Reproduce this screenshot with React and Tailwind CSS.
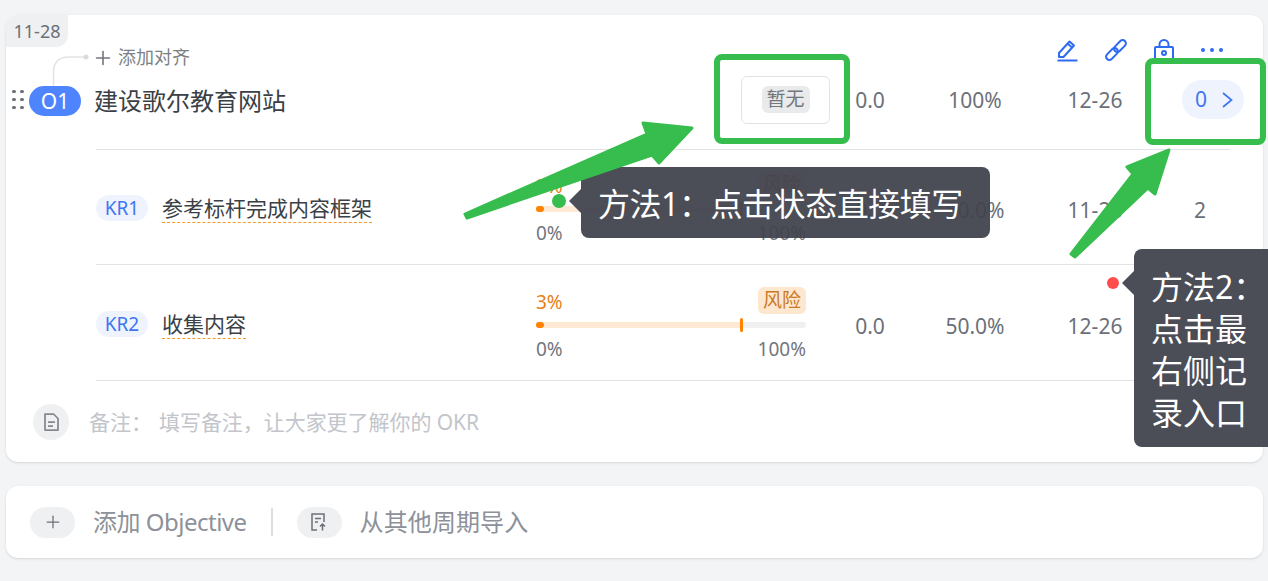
import { Plus } from 'lucide-react';

const sans = "font-['Noto_Sans','Noto_Sans_CJK_SC',sans-serif]";

function ProgressCell({ fill }) {
  return (
    <div className="w-[270px] mb-[4px] flex flex-col">
      <div className="flex items-center justify-between h-[27px]">
        <span className="pt-[4px] text-[19px] text-[#e87f13]">3%</span>
        <span className="h-[27px] w-[48px] rounded-md bg-[#fde7cf] text-[19px] leading-[27px] text-center text-[#c97a26]">风险</span>
      </div>
      <div className="relative mt-2 h-[6px] rounded-full bg-[#f0f0f0]">
        <div className={`h-full rounded-l-full bg-[#fde9d4] ${fill}`} />
        <div className="absolute left-0 top-0 h-full w-[8px] rounded-full bg-[#ff8200]" />
        <div className="absolute left-[204px] top-[-4px] h-[14px] w-[3px] rounded-sm bg-[#ff8200]" />
      </div>
      <div className="mt-[9px] flex justify-between text-[19px] leading-[24px] text-[#73767c]">
        <span>0%</span>
        <span>100%</span>
      </div>
    </div>
  );
}

function Stats({ score, percent, date, children }) {
  return (
    <div className="ml-[4px] flex items-center text-[21px] text-[#6b7078] text-center">
      <span className="w-[120px] pt-[2px]">{score}</span>
      <span className="w-[90px] pt-[2px]">{percent}</span>
      <span className="w-[150px] pt-[2px]">{date}</span>
      <div className="w-[60px] flex justify-center">{children}</div>
    </div>
  );
}

function KrRow({ name, label, percent, date, count, height }) {
  return (
    <div className={`ml-[90px] w-[1134px] pt-[6px] flex items-center border-b border-[#e2e3e5] ${height}`}>
      <div className="w-[440px] mb-[2px] flex items-center">
        <span className="mb-[2px] h-[26px] w-[52px] rounded-full bg-[#eef3fe] text-center text-[19px] leading-[26px] text-[#3f76f0]">{label}</span>
        <span className="ml-[14px] text-[21px] leading-[27px] text-[#3b3f46] border-b border-dashed border-[#f59a23]">{name}</span>
      </div>
      <ProgressCell fill="w-[204px]" />
      <Stats score="0.0" percent={percent} date={date}>
        <span className="pt-[2px]">{count}</span>
      </Stats>
    </div>
  );
}

function Callout({ className, arrow, children }) {
  return (
    <div className={`absolute rounded-lg bg-[#41434e]/95 text-white text-[32px] ${className}`}>
      <span className={`absolute h-0 w-0 border-y-[12px] border-r-[12px] border-y-transparent border-r-[#41434e]/95 ${arrow}`} />
      {children}
    </div>
  );
}

export default function App() {
  return (
    <div className={`relative h-[581px] w-[1268px] overflow-hidden bg-[#f3f4f6] pt-[15px] pl-[6px] ${sans}`}>
      <div className="relative h-[447px] w-[1257px] rounded-xl bg-white shadow-sm">
        <div className="absolute left-0 top-0 h-[32px] w-[62px] rounded-tl-xl rounded-br-xl bg-[#eff0f2] text-center text-[18px] leading-[32px] text-[#6b7078]">11-28</div>

        <div className="h-[51px] pt-[34px] flex items-center">
          <svg className="absolute left-[46px] top-[36px]" width="40" height="40" viewBox="0 0 40 40" fill="none">
            <path d="M1.500 35V20C1.500 11 8 6 16 6H32" stroke="#e2e3e5" strokeWidth="1.500" />
            <circle cx="34" cy="6" r="2.500" fill="#d9dbe0" />
          </svg>
          <Plus className="ml-[86px] text-[#73767c]" size={22} strokeWidth={1.750} />
          <span className="ml-[4px] text-[18px] text-[#7b7f86]">添加对齐</span>
          <div className="ml-auto mr-[40px] mb-[15px] flex items-center text-[#2e6bf0]">
            <svg width="24" height="24" viewBox="0 0 24 24" fill="none" stroke="currentColor" strokeWidth="2" strokeLinejoin="round">
              <path d="M3 15 13.500 3.500l4.500 4-10.500 11.500H3z" />
              <path d="M11.500 5.500l4.500 4" />
              <path d="M1.500 22.500h20" />
            </svg>
            <svg className="ml-[24px]" width="24" height="24" viewBox="0 0 24 24" fill="none" stroke="currentColor" strokeWidth="2">
              <rect x="1" y="12.750" width="14" height="6.500" rx="3.250" transform="rotate(-45 8 16)" />
              <rect x="9" y="4.750" width="14" height="6.500" rx="3.250" transform="rotate(-45 16 8)" />
            </svg>
            <svg className="ml-[26px]" width="20" height="22" viewBox="0 0 20 22" fill="none" stroke="currentColor" strokeWidth="2">
              <rect x="1" y="8" width="18" height="12" rx="1" />
              <path d="M5.500 8V5.500a4.500 4.500 0 0 1 9 0V8" />
              <circle cx="10" cy="14" r="2" />
            </svg>
            <div className="ml-[27px] flex gap-[5px]">
              <span className="h-[4px] w-[4px] rounded-full bg-current" />
              <span className="h-[4px] w-[4px] rounded-full bg-current" />
              <span className="h-[4px] w-[4px] rounded-full bg-current" />
            </div>
          </div>
        </div>

        <div className="h-[83px] pb-[16px] flex items-center">
          <div className="ml-[6px] grid grid-cols-2 gap-x-[4.500px] gap-y-[4.500px]">
            {[0, 1, 2, 3, 4, 5].map((i) => (
              <span key={i} className="h-[3.500px] w-[3.500px] rounded-full bg-[#6b7078]" />
            ))}
          </div>
          <span className="ml-[5.500px] mt-[2px] h-[30px] w-[52px] rounded-full bg-[#4f84ff] text-center text-[21px] leading-[30px] text-white">O1</span>
          <div className="ml-[13px] mt-[2px] w-[647px] text-[24px] text-[#3b3f46]">建设歌尔教育网站</div>
          <div className="h-[48px] w-[89px] rounded-md border border-[#e2e3e5] flex items-center justify-center">
            <span className="h-[27px] w-[48px] rounded-md bg-[#e9eaeb] text-center text-[19px] leading-[27px] text-[#73767c]">暂无</span>
          </div>
          <span className="ml-[-24px]">
            <Stats score="0.0" percent="100%" date="12-26">
              <div className="ml-[26px] pl-[13px] h-[39px] w-[62px] shrink-0 rounded-full bg-[#eef3fe] flex items-center gap-[15px] text-[#3f76f0]">
                <span>0</span>
                <svg width="11" height="16" viewBox="0 0 11 16" fill="none" stroke="currentColor" strokeWidth="1.750">
                  <path d="M1 1l8.500 7L1 15" />
                </svg>
              </div>
            </Stats>
          </span>
        </div>

        <div className="ml-[90px] w-[1134px] border-b border-[#e2e3e5]" />
        <KrRow label="KR1" name="参考标杆完成内容框架" percent="50.0%" date="11-28" count="2" height="h-[115px]" />
        <KrRow label="KR2" name="收集内容" percent="50.0%" date="12-26" count="2" height="h-[116px]" />

        <div className="h-[81px] flex items-center">
          <span className="ml-[27px] h-[36px] w-[36px] rounded-full bg-[#eff0f2] flex items-center justify-center text-[#85888f]">
            <svg width="15" height="18" viewBox="0 0 15 18" fill="none" stroke="currentColor" strokeWidth="1.750" strokeLinejoin="round">
              <path d="M1 1h8.500L14 5.500V17H1z" />
              <path d="M4 9h7M4 13h5" />
            </svg>
          </span>
          <span className="ml-[20px] pt-[2px] text-[21px] text-[#c2c5ca]">备注：</span>
          <span className="ml-[7px] pt-[2px] text-[21px] tracking-[-0.05px] text-[#c2c5ca]">填写备注，让大家更了解你的 OKR</span>
        </div>
      </div>

      <div className="mt-[24px] h-[72px] w-[1257px] rounded-xl bg-white shadow-sm flex items-center">
        <span className="ml-[24px] h-[31px] w-[45px] rounded-full bg-[#eff0f2] flex items-center justify-center text-[#6b7078]">
          <Plus size={20} strokeWidth={1.500} />
        </span>
        <span className="ml-[18px] text-[24px] tracking-[-0.5px] text-[#8d9199]">添加 Objective</span>
        <span className="ml-[24px] h-[28px] w-[2px] bg-[#dcdee1]" />
        <span className="ml-[24px] h-[31px] w-[45px] rounded-full bg-[#eff0f2] flex items-center justify-center text-[#6b7078]">
          <svg width="18" height="20" viewBox="0 0 18 20" fill="none" stroke="currentColor" strokeWidth="1.500">
            <path d="M7 18H2V2h12v8" />
            <path d="M5 6.500h6M5 10h3" />
            <path d="M12.500 18.500v-6M10 14.500l2.500-2.500 2.500 2.500" />
          </svg>
        </span>
        <span className="ml-[18px] text-[24px] tracking-[0.1px] text-[#8d9199]">从其他周期导入</span>
      </div>

      {/* 教程标注层 */}
      <Callout className="left-[581px] top-[167px] h-[71px] w-[409px] pl-[17px] pt-[1px] leading-[71px] tracking-[-0.45px] whitespace-nowrap" arrow="left-[-12px] top-[22px]">
        方法1：点击状态直接填写
      </Callout>
      <Callout className="left-[1134px] top-[249px] h-[198px] w-[134px] pl-[17px] pt-[17px] leading-[42px] rounded-r-none" arrow="left-[-12px] top-[22px]">
        方法2：<br />点击最<br />右侧记<br />录入口
      </Callout>
      <span className="absolute left-[552px] top-[194px] h-[14px] w-[14px] rounded-full bg-[#36bd4d]" />
      <span className="absolute left-[1107px] top-[277px] h-[12px] w-[12px] rounded-full bg-[#ff4d4d]" />
      <div className="absolute left-[714px] top-[54px] h-[90px] w-[136px] rounded-lg border-[6px] border-[#36bd4d]" />
      <div className="absolute left-[1145px] top-[58px] h-[87px] w-[121px] rounded-lg border-[6px] border-[#36bd4d]" />
      <svg className="absolute inset-0 pointer-events-none" width="1268" height="581" viewBox="0 0 1268 581" fill="#36bd4d" stroke="#36bd4d" strokeWidth="3" strokeLinejoin="round">
        <path d="M465 214 647 134 643 123 692 128 659 163 652 155 467 218Z" />
        <path d="M1071 254 1133 174 1127 167 1169 150 1155 194 1148 188 1075 257Z" />
      </svg>
    </div>
  );
}
